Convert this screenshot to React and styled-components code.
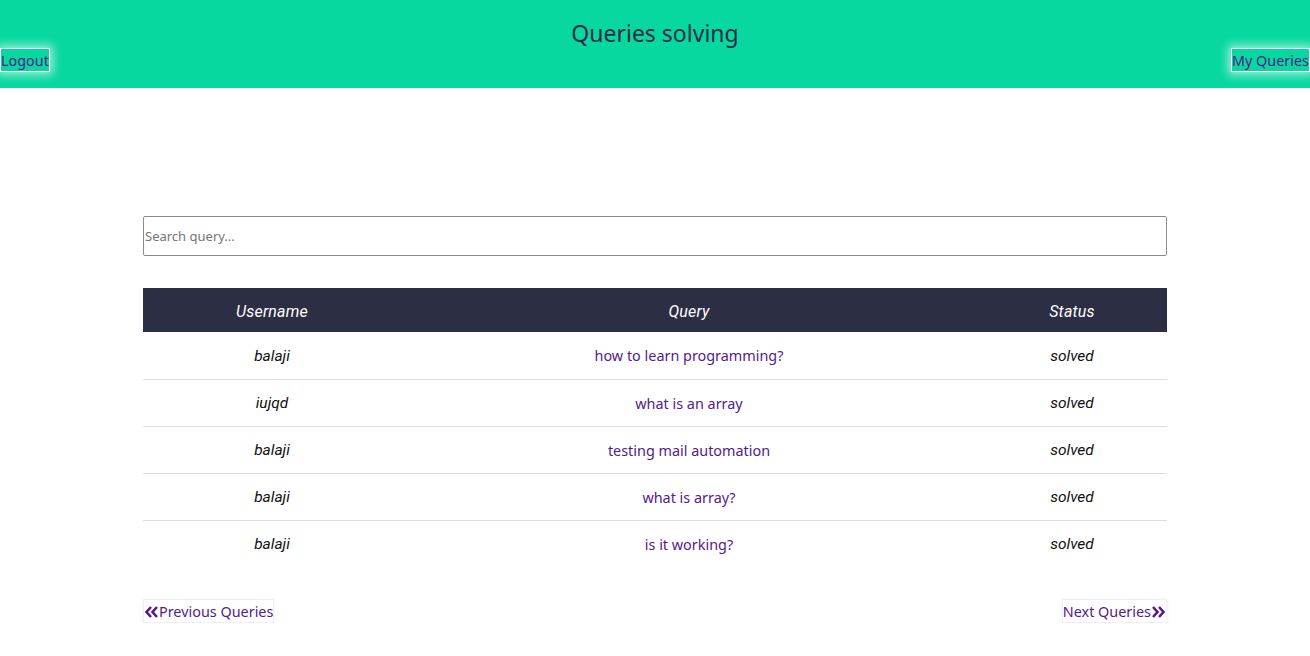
import styled, { createGlobalStyle } from "styled-components";

const GlobalStyle = createGlobalStyle`
  body {
    margin: 0;
    font-family: "Noto Sans", "Open Sans", sans-serif;
    background: #fff;
  }
`;

const queries = [
  { user: "balaji", query: "how to learn programming?", status: "solved" },
  { user: "iujqd", query: "what is an array", status: "solved" },
  { user: "balaji", query: "testing mail automation", status: "solved" },
  { user: "balaji", query: "what is array?", status: "solved" },
  { user: "balaji", query: "is it working?", status: "solved" },
];

const App = () => {
  return (
    <>
      <GlobalStyle />
      <Header>
        <Title>Queries solving</Title>
        <NavRow>
          <NavButton href="#">Logout</NavButton>
          <NavButton href="#">My Queries</NavButton>
        </NavRow>
      </Header>
      <Main>
        <Search placeholder="Search query..." />
        <Table>
          <thead>
            <tr>
              <Th>Username</Th>
              <Th>Query</Th>
              <Th>Status</Th>
            </tr>
          </thead>
          <tbody>
            {queries.map((q, i) => (
              <Row key={i}>
                <Td>{q.user}</Td>
                <QueryCell><QueryLink href="#">{q.query}</QueryLink></QueryCell>
                <Td>{q.status}</Td>
              </Row>
            ))}
          </tbody>
        </Table>
        <Pager>
          <PageButton href="#">
            <Chevrons dir="left" />Previous Queries
          </PageButton>
          <PageButton href="#">
            Next Queries<Chevrons dir="right" />
          </PageButton>
        </Pager>
      </Main>
    </>
  );
};

const Chevrons = ({ dir }) => (
  <svg width="15" height="14" viewBox="0 0 15 14" style={{ transform: dir === "right" ? "scaleX(-1)" : "none" }}>
    <path d="M7 2 L2.5 7 L7 12 M13 2 L8.5 7 L13 12" fill="none" stroke="#551a8b" strokeWidth="2.6" />
  </svg>
);

export default App;

const Header = styled.header`
  height: 88px;
  background-color: #07d8a0;
  display: flex;
  flex-direction: column;
  align-items: center;
`;

const Title = styled.h1`
  margin: 18px 0 0;
  font-family: "Noto Sans", sans-serif;
  font-weight: 400;
  font-size: 23px;
  line-height: 30px;
  color: #2a2d45;
`;

const NavRow = styled.div`
  width: 100%;
  display: flex;
  justify-content: space-between;
`;

const NavButton = styled.a`
  display: block;
  height: 21px;
  padding: 1px 0 0;
  border: 1px solid #fff;
  box-shadow: 0 0 10px 3px rgba(255, 255, 255, 0.6);
  font-family: "Noto Sans", sans-serif;
  font-size: 14.4px;
  line-height: 22px;
  color: #551a8b;
  text-decoration: none;
`;

const Main = styled.main`
  width: 1024px;
  margin: 128px auto 0;
`;

const Search = styled.input`
  display: block;
  box-sizing: border-box;
  width: 100%;
  height: 40px;
  padding: 0 1px;
  border: 1px solid #8a8a95;
  border-radius: 2px;
  font-family: "Noto Sans", sans-serif;
  font-size: 13px;
  outline: none;
  &::placeholder {
    color: #757575;
  }
`;

const Table = styled.table`
  width: 100%;
  margin-top: 32px;
  border-collapse: collapse;
  font-family: "Roboto", sans-serif;
`;

const Th = styled.th`
  height: 44px;
  padding: 2px 0 0;
  box-sizing: border-box;
  background-color: #2c2e44;
  color: #fff;
  font-weight: 400;
  font-style: italic;
  font-size: 16px;
  letter-spacing: 0.2px;
  text-align: center;
  &:first-child { width: 258px; }
  &:last-child { width: 190px; }
`;

const Row = styled.tr`
  border-bottom: 1px solid #dddde3;
  &:last-child { border-bottom: none; }
`;

const Td = styled.td`
  height: 47px;
  padding: 1px 0 0;
  box-sizing: border-box;
  text-align: center;
  font-style: italic;
  font-size: 15.5px;
  color: #111;
`;

const QueryCell = styled(Td)`
  font-style: normal;
`;

const QueryLink = styled.a`
  font-family: "Noto Sans", sans-serif;
  font-size: 14.4px;
  color: #551a8b;
  text-decoration: none;
`;

const Pager = styled.div`
  display: flex;
  justify-content: space-between;
  margin-top: 32px;
`;

const PageButton = styled.a`
  display: flex;
  align-items: center;
  height: 21px;
  padding-top: 1px;
  border: 1px solid #eeeef4;
  box-shadow: 0 2px 6px rgba(0, 0, 0, 0.06);
  font-family: "Noto Sans", sans-serif;
  font-size: 14.4px;
  color: #551a8b;
  text-decoration: none;
`;
